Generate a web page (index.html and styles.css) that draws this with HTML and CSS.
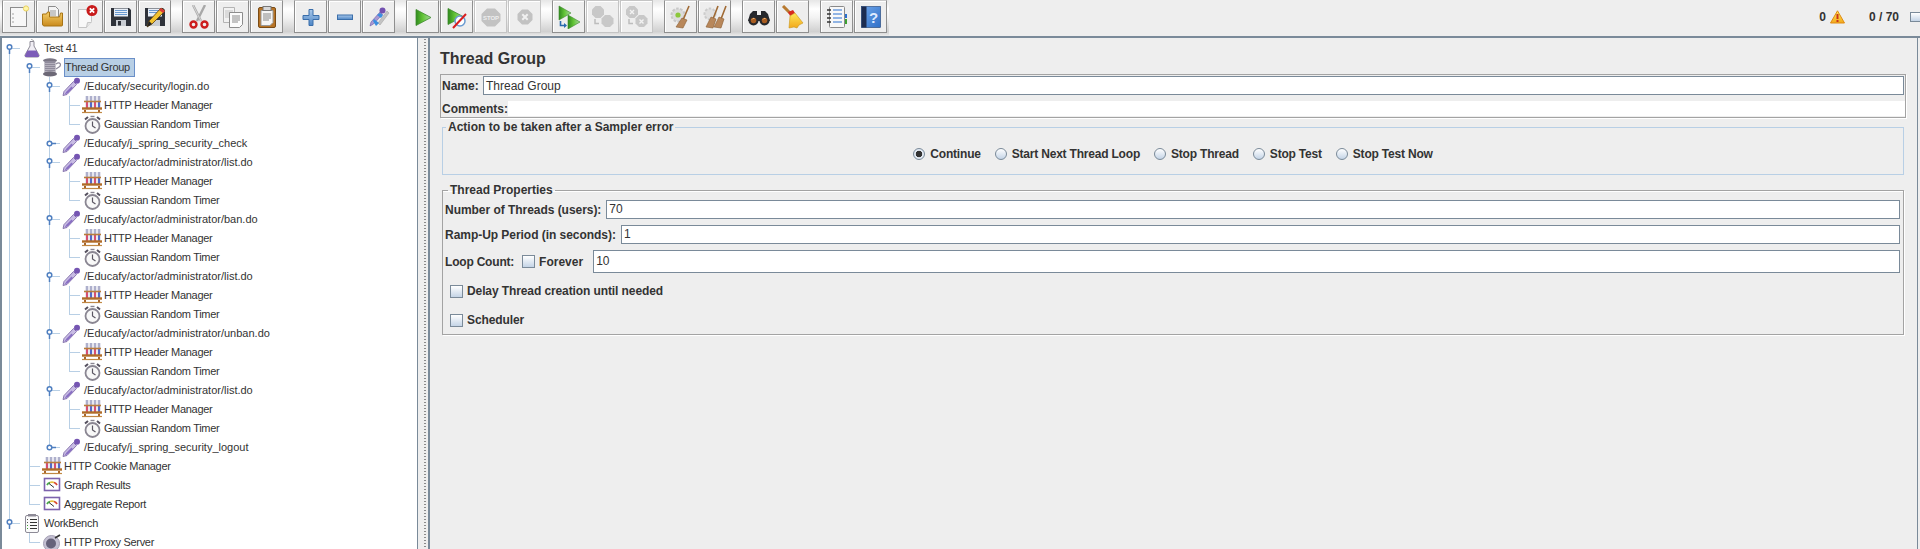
FILE: index.html
```html
<!DOCTYPE html>
<html lang="en">
<head>
<meta charset="utf-8">
<title>Apache JMeter - Test 41</title>
<link rel="stylesheet" href="styles.css">
</head>
<body>
<svg class="sprite" aria-hidden="true">
  <defs>
    <linearGradient id="gGreen" x1="0" y1="0" x2="1" y2="0"><stop offset="0" stop-color="#2f8a1e"/><stop offset=".45" stop-color="#62c436"/><stop offset="1" stop-color="#a8d8a0"/></linearGradient>
    <linearGradient id="gFolder" x1="0" y1="0" x2="0" y2="1"><stop offset="0" stop-color="#f6cf6a"/><stop offset="1" stop-color="#c98a1c"/></linearGradient>
    <linearGradient id="gBlue" x1="0" y1="0" x2="0" y2="1"><stop offset="0" stop-color="#a9c8ea"/><stop offset="1" stop-color="#4d86c6"/></linearGradient>
    <linearGradient id="gYel" x1="0" y1="0" x2="0" y2="1"><stop offset="0" stop-color="#ffe95a"/><stop offset="1" stop-color="#f2a81c"/></linearGradient>
    <linearGradient id="gBook" x1="0" y1="0" x2="1" y2="1"><stop offset="0" stop-color="#6fa6ea"/><stop offset="1" stop-color="#2f6fc8"/></linearGradient>

    <symbol id="t-new" viewBox="0 0 24 24"><rect x="3.500" y="2.500" width="16" height="19" fill="#f7f7f7" stroke="#8c8c8c"/><circle cx="6" cy="9" r=".8" fill="#999"/><circle cx="6" cy="13" r=".8" fill="#999"/><circle cx="6" cy="17" r=".8" fill="#999"/><circle cx="19" cy="3.500" r="2.600" fill="#fff6a8" stroke="#e8d060"/></symbol>
    <symbol id="t-open" viewBox="0 0 24 24"><path d="M7.500 1.500h7l3 3v9h-10z" fill="#f4f4f4" stroke="#8c8c8c"/><path d="M9 6h6M9 8h6M9 10h6" stroke="#9a9a9a"/><path d="M1.500 9h4l1-2h2v5h10l1-4h2v12a1 1 0 0 1-1 1H3a2 2 0 0 1-1.500-2z" fill="url(#gFolder)" stroke="#a87414"/></symbol>
    <symbol id="t-close" viewBox="0 0 24 24"><path d="M3.500 4.500h13v12l-5 6h-8z" fill="#f8f8f8" stroke="#c4c4c4"/><path d="M11.500 22.500l1-5h4" fill="#e4e4e4" stroke="#c4c4c4"/><circle cx="17" cy="5.500" r="5.500" fill="#c81a1a"/><path d="M14.800 3.300l4.400 4.400M19.200 3.300l-4.400 4.400" stroke="#fff" stroke-width="1.800"/></symbol>
    <symbol id="t-save" viewBox="0 0 24 24"><path d="M2 3h18l2 2v16H2z" fill="#2e323a"/><rect x="5" y="3.500" width="14" height="8" fill="#e8eef6"/><path d="M6 5.500h12M6 7.500h12M6 9.500h12" stroke="#6a9ad0"/><rect x="7" y="15" width="10" height="6" fill="#c8ccd2"/><rect x="9" y="16" width="3" height="4.500" fill="#2e323a"/></symbol>
    <symbol id="t-saveas" viewBox="0 0 24 24"><path d="M2 3h18l2 2v16H2z" fill="#2e323a"/><rect x="5" y="3.500" width="14" height="8" fill="#e8eef6"/><path d="M6 5.500h12M6 7.500h12" stroke="#6a9ad0"/><rect x="7" y="15" width="10" height="6" fill="#c8ccd2"/><path d="M4 22l2-6L18 3l4 3-13 13z" fill="#f2c230" stroke="#5a3c10" stroke-width=".8"/><path d="M18 3l4 3-2 2-4-3z" fill="#d83a3a"/><path d="M4 22l2-6 3 3z" fill="#222"/></symbol>
    <symbol id="t-cut" viewBox="0 0 24 24"><path d="M6 0l8 16M18 0l-8 16" stroke="#a8a8a8" stroke-width="2.400"/><path d="M6 0l8 16" stroke="#d8d8d8" stroke-width="1"/><circle cx="6.500" cy="19.500" r="3" fill="none" stroke="#cc1e1e" stroke-width="2.400"/><circle cx="17.500" cy="19.500" r="3" fill="none" stroke="#cc1e1e" stroke-width="2.400"/></symbol>
    <symbol id="t-copy" viewBox="0 0 24 24"><path d="M2.500 2.500h11v15h-11z" fill="#f2f2f2" stroke="#b4b4b4"/><path d="M4 6h8M4 8h8M4 10h8M4 12h8" stroke="#c4c4c4"/><path d="M8.500 7.500h13v12l-3 3h-10z" fill="#fbfbfb" stroke="#8c8c8c"/><path d="M11 11h8M11 13h8M11 15h8M11 17h6" stroke="#8a8a8a"/></symbol>
    <symbol id="t-paste" viewBox="0 0 24 24"><rect x="3.500" y="2.500" width="17" height="20" rx="1.500" fill="#b87426" stroke="#7a4c16"/><path d="M6 5.500h12v12l-3 3H6z" fill="#f6f6f6" stroke="#999"/><rect x="8" y="1.500" width="8" height="4" fill="#d8d8d8" stroke="#777"/><path d="M8 9h8M8 11h8M8 13h8M8 15h6" stroke="#888"/></symbol>
    <symbol id="t-plus" viewBox="0 0 24 24"><path d="M10 4.500h4v6h6v4h-6v6h-4v-6H4v-4h6z" fill="url(#gBlue)" stroke="#3a6eaa"/></symbol>
    <symbol id="t-minus" viewBox="0 0 24 24"><rect x="4.500" y="10" width="15" height="4.500" fill="url(#gBlue)" stroke="#3a6eaa"/></symbol>
    <symbol id="t-toggle" viewBox="0 0 24 24"><path d="M11 18l9-12 2 2-9 12z" fill="#c4c4c4" stroke="#a4a4a4" stroke-width=".6"/><path d="M3 21l1-4L13 7l2.500 2.500-9 9.500z" fill="#a79ad4" stroke="#6c58a8" stroke-width=".6"/><circle cx="15.500" cy="5.500" r="3" fill="#7250b0"/><path d="M7 14l5 4-3 3-3-5zM10 10l4 3 2-3-3-2z" fill="#3a8ee0"/></symbol>
    <symbol id="t-play" viewBox="0 0 24 24"><path d="M5 4.500l15 8-15 8z" fill="url(#gGreen)" stroke="#3c8a2c" stroke-width=".8"/></symbol>
    <symbol id="t-playnt" viewBox="0 0 24 24"><path d="M3 3.500l15 8-15 8z" fill="url(#gGreen)" stroke="#3c8a2c" stroke-width=".8"/><circle cx="15" cy="16" r="5" fill="#fff" stroke="#6a9ad0" stroke-width="1.500"/><path d="M8 23L21 9" stroke="#d81e1e" stroke-width="2"/></symbol>
    <symbol id="t-stop" viewBox="0 0 24 24"><path d="M8 3.500h8l5.500 5.500v7l-5.500 5.500H8L2.500 16V9z" fill="#c2c2c2"/><text x="12" y="15" class="svgtxt" text-anchor="middle">STOP</text></symbol>
    <symbol id="t-shut" viewBox="0 0 24 24"><path d="M9 4.500h6l4.500 4.500v6L15 19.500H9L4.500 15V9z" fill="#c2c2c2"/><path d="M9.300 9.300l5.400 5.400M14.700 9.300l-5.400 5.400" stroke="#f0f0f0" stroke-width="2"/></symbol>
    <symbol id="t-rstart" viewBox="0 0 24 24"><path d="M2 1l12 7-12 7z" fill="url(#gGreen)" stroke="#3c8a2c" stroke-width=".6"/><path d="M11 10l12 7-12 7z" fill="url(#gGreen)" stroke="#3c8a2c" stroke-width=".6"/><path d="M3.500 16v4.500h5" fill="none" stroke="#2a6ab0" stroke-width="1.600"/><path d="M7 18l3 2.500-3 2.500z" fill="#2a6ab0"/></symbol>
    <symbol id="t-rstop" viewBox="0 0 24 24"><path d="M4.500 1h5L13 4.500v5L9.500 13h-5L1 9.500v-5z" fill="#c8c8c8"/><path d="M14 10h5l3.500 3.500v5L19 22h-5l-3.500-3.500v-5z" fill="#c8c8c8"/><path d="M4 14v4.500h4" fill="none" stroke="#bdbdbd" stroke-width="1.500"/></symbol>
    <symbol id="t-rshut" viewBox="0 0 24 24"><path d="M4.500 1h5L13 4.500v5L9.500 13h-5L1 9.500v-5z" fill="#c8c8c8"/><path d="M14 10h5l3.500 3.500v5L19 22h-5l-3.500-3.500v-5z" fill="#c8c8c8"/><path d="M5 5l4 4M9 5l-4 4M14.500 14.500l4 4M18.500 14.500l-4 4" stroke="#f2f2f2" stroke-width="1.400"/><path d="M4 14v4.500h4" fill="none" stroke="#bdbdbd" stroke-width="1.500"/></symbol>
    <symbol id="t-clear" viewBox="0 0 24 24"><circle cx="9" cy="10" r="6.500" fill="#dcdcdc" stroke="#c8c8c8" stroke-width="2" stroke-dasharray="2.500 1.500"/><circle cx="9" cy="10" r="2.600" fill="#8cc83c"/><path d="M20 1l-6 14" stroke="#a06a34" stroke-width="1.600"/><path d="M13 13l5 2-4 8-7-1z" fill="#b8875a" stroke="#8a5c30" stroke-width=".6"/></symbol>
    <symbol id="t-clearall" viewBox="0 0 24 24"><circle cx="7" cy="9" r="5.500" fill="#e0e0e0" stroke="#cccccc" stroke-width="2" stroke-dasharray="2.500 1.500"/><path d="M15 1l-5 13M23 1l-5 13" stroke="#a06a34" stroke-width="1.600"/><path d="M8 12l5 2-3 9-7-1zM16 12l5 2-3 9-7-1z" fill="#b8875a" stroke="#8a5c30" stroke-width=".6"/></symbol>
    <symbol id="t-find" viewBox="0 0 24 24"><path d="M3 9l3-3h4v4h4V6h4l3 3 2 7H1z" fill="#26282c"/><circle cx="6.500" cy="15.500" r="5" fill="#26282c"/><circle cx="17.500" cy="15.500" r="5" fill="#26282c"/><circle cx="6.500" cy="15.500" r="2.800" fill="#a85c20"/><circle cx="17.500" cy="15.500" r="2.800" fill="#a85c20"/><path d="M5 14.500a2 2 0 0 1 2.500-1M16 14.500a2 2 0 0 1 2.500-1" stroke="#f0c080" fill="none"/></symbol>
    <symbol id="t-broom" viewBox="0 0 24 24"><path d="M2 1l7 7" stroke="#b87a30" stroke-width="3"/><path d="M7 7l5-2 2 3-5 3z" fill="#d82a1e"/><path d="M9 11l5-3 8 10-4 2-2 3-3-1-5 1z" fill="url(#gYel)" stroke="#c8961c" stroke-width=".6"/></symbol>
    <symbol id="t-func" viewBox="0 0 24 24"><rect x="4.500" y="1.500" width="15" height="21" rx="1" fill="#f8f8f8" stroke="#8a8a8a"/><path d="M8 5h9M8 9h9M8 13h9M8 17h9" stroke="#2a70d0" stroke-width="1.200"/><path d="M2 5h4M2 9h4M2 13h4M2 17h4" stroke="#333" stroke-width="1.400"/><path d="M21 9v4" stroke="#2a70d0" stroke-width="2"/><path d="M21 14v5" stroke="#3ca030" stroke-width="2"/></symbol>
    <symbol id="t-help" viewBox="0 0 24 24"><rect x="2.500" y="1.500" width="19" height="21" fill="url(#gBook)" stroke="#1c3c70" stroke-width=".6"/><rect x="2.500" y="1.500" width="5" height="21" fill="#1c2c50"/><text x="14.500" y="18" class="svghelp" text-anchor="middle">?</text></symbol>

    <symbol id="n-flask" viewBox="0 0 20 19"><path d="M8 2.500h4v4.500l5 9a1.500 1.500 0 0 1-1.500 2h-11A1.500 1.500 0 0 1 3 16l5-9z" fill="#f0eef4" stroke="#8d8a96"/><path d="M5.500 11.500h9l2.500 5a1 1 0 0 1-1 1.500H4a1 1 0 0 1-1-1.500z" fill="#7c5cb8"/><path d="M9 0l3 2" stroke="#aaa"/></symbol>
    <symbol id="n-spool" viewBox="0 0 20 19"><ellipse cx="8" cy="2.500" rx="7" ry="2.200" fill="#7a7684"/><rect x="2.500" y="3" width="11" height="12" fill="#8f8b9b"/><path d="M3 5.500h10M3 7.500h10M3 9.500h10M3 11.500h10M3 13.500h10" stroke="#b4b0bc"/><ellipse cx="8" cy="16" rx="7" ry="2.500" fill="#6c6876"/><path d="M14 6c4-3 6 1 3 3l-3 2" fill="none" stroke="#8f8b9b" stroke-width="1.200"/></symbol>
    <symbol id="n-pipette" viewBox="0 0 20 19"><path d="M1 18.500l1-4L11.500 4.500 14.500 7.500 5 17.500z" fill="#c8bce4" stroke="#75609f" stroke-width=".8"/><path d="M2.500 17.500l2-3 5-5 1.500 1.500-5 5z" fill="#8a70c4"/><circle cx="15" cy="3.800" r="3" fill="#7555b2"/></symbol>
    <symbol id="n-rack" viewBox="0 0 20 19"><path d="M5 0v12M9 0v12M13 0v12M17 0v12" stroke="#aeb0cc" stroke-width="2.600"/><path d="M5 5v7M13 5v7" stroke="#dc4468" stroke-width="1.800"/><path d="M9 5v7M17 5v7" stroke="#4a62c8" stroke-width="1.800"/><path d="M2 5.500h17" stroke="#b87c3c" stroke-width="1.600"/><path d="M0 12.500h20" stroke="#b06c28" stroke-width="2.400"/><path d="M3 14v3M17 14v3" stroke="#a8642a" stroke-width="2"/><path d="M0 16.500h20" stroke="#c08844" stroke-width="1.200"/></symbol>
    <symbol id="n-clock" viewBox="0 0 20 19"><circle cx="10.500" cy="11" r="7" fill="#f8f8f8" stroke="#8a8692" stroke-width="1.800"/><path d="M10.500 6.500V11l3 2" fill="none" stroke="#5a5662" stroke-width="1.200"/><path d="M3 4.500l3-2.500M18 4.500l-3-2.500" stroke="#55505e" stroke-width="2"/><path d="M8.500 1.500h4" stroke="#8a8692" stroke-width="1.400"/></symbol>
    <symbol id="n-graph" viewBox="0 0 20 19"><rect x="2.500" y="2.500" width="15" height="12" fill="#fff" stroke="#7c62ad" stroke-width="1.600"/><path d="M5 9a5 5 0 0 1 3-2.500" fill="none" stroke="#48a848" stroke-width="1.800"/><path d="M8 6.500a5 5 0 0 1 4 0" fill="none" stroke="#e8c040" stroke-width="1.800"/><path d="M12 6.500a5 5 0 0 1 3 2.500" fill="none" stroke="#d84830" stroke-width="1.800"/><path d="M7 7.500l5 4" stroke="#333"/></symbol>
    <symbol id="n-bench" viewBox="0 0 20 19"><rect x="3.500" y="1.500" width="13" height="17" rx="1.500" fill="#fafafa" stroke="#8d8a96"/><rect x="6" y="0" width="8" height="2.500" fill="#8d8a96"/><path d="M8 5.500h7M8 8.500h7M8 11.500h7M8 14.500h7" stroke="#333" stroke-width="1.100"/><path d="M5 5.500h1M5 8.500h1" stroke="#555"/><path d="M5 11.500h1M5 14.500h1" stroke="#3ca030"/></symbol>
    <symbol id="n-proxy" viewBox="0 0 20 19"><circle cx="9.500" cy="10.500" r="8" fill="#c4c0d2" stroke="#a49fb4"/><circle cx="9" cy="10.500" r="5" fill="#66627a"/><path d="M13 5l5-3" stroke="#333" stroke-width="1.600"/></symbol>
    <symbol id="h-open" viewBox="0 0 20 19"><path d="M10 9.500h8" stroke="#b8cfe5"/><circle cx="7.500" cy="8" r="2.300" fill="#fff" stroke="#4f7fc0" stroke-width="1.500"/><path d="M7.500 10v5" stroke="#4f7fc0" stroke-width="1.500"/></symbol>
    <symbol id="h-closed" viewBox="0 0 20 19"><path d="M13 9.500h5" stroke="#b8cfe5"/><circle cx="7.500" cy="9.500" r="2.300" fill="#fff" stroke="#4f7fc0" stroke-width="1.500"/><path d="M10 9.500h4" stroke="#4f7fc0" stroke-width="1.500"/></symbol>
  </defs>
</svg>

<header class="toolbar">
  <div class="tools">
    <div class="group">
      <button class="tb"><svg class="ti"><use href="#t-new"/></svg></button>
      <button class="tb"><svg class="ti"><use href="#t-open"/></svg></button>
      <button class="tb"><svg class="ti"><use href="#t-close"/></svg></button>
      <button class="tb"><svg class="ti"><use href="#t-save"/></svg></button>
      <button class="tb"><svg class="ti"><use href="#t-saveas"/></svg></button>
    </div>
    <div class="group">
      <button class="tb"><svg class="ti"><use href="#t-cut"/></svg></button>
      <button class="tb"><svg class="ti"><use href="#t-copy"/></svg></button>
      <button class="tb"><svg class="ti"><use href="#t-paste"/></svg></button>
    </div>
    <div class="group">
      <button class="tb"><svg class="ti"><use href="#t-plus"/></svg></button>
      <button class="tb"><svg class="ti"><use href="#t-minus"/></svg></button>
      <button class="tb"><svg class="ti"><use href="#t-toggle"/></svg></button>
    </div>
    <div class="group">
      <button class="tb"><svg class="ti"><use href="#t-play"/></svg></button>
      <button class="tb"><svg class="ti"><use href="#t-playnt"/></svg></button>
      <button class="tb off"><svg class="ti"><use href="#t-stop"/></svg></button>
      <button class="tb off"><svg class="ti"><use href="#t-shut"/></svg></button>
    </div>
    <div class="group">
      <button class="tb"><svg class="ti"><use href="#t-rstart"/></svg></button>
      <button class="tb off"><svg class="ti"><use href="#t-rstop"/></svg></button>
      <button class="tb off"><svg class="ti"><use href="#t-rshut"/></svg></button>
    </div>
    <div class="group">
      <button class="tb"><svg class="ti"><use href="#t-clear"/></svg></button>
      <button class="tb"><svg class="ti"><use href="#t-clearall"/></svg></button>
    </div>
    <div class="group">
      <button class="tb"><svg class="ti"><use href="#t-find"/></svg></button>
      <button class="tb"><svg class="ti"><use href="#t-broom"/></svg></button>
    </div>
    <div class="group">
      <button class="tb"><svg class="ti"><use href="#t-func"/></svg></button>
      <button class="tb"><svg class="ti"><use href="#t-help"/></svg></button>
    </div>
  </div>
  <div class="status">
    <b class="count">0</b>
    <svg class="warn" viewBox="0 0 15 14"><path d="M7.500 .8L14.500 13H.5z" fill="url(#gYel)" stroke="#e08a10"/><path d="M7.500 4v5" stroke="#c8341a" stroke-width="2"/><path d="M7.500 10v2" stroke="#c8341a" stroke-width="2"/></svg>
    <b class="threads">0 / 70</b>
    <span class="led"></span>
  </div>
</header>

<main class="split">
  <nav class="tree">
    <div class="row"><i class="g d"><svg class="h"><use href="#h-open"/></svg></i><svg class="ic"><use href="#n-flask"/></svg><span class="lb">Test 41</span></div>
    <div class="row"><i class="g v"></i><i class="g d"><svg class="h"><use href="#h-open"/></svg></i><svg class="ic"><use href="#n-spool"/></svg><span class="lb sel">Thread Group</span></div>
    <div class="row"><i class="g v"></i><i class="g v"></i><i class="g v"><svg class="h"><use href="#h-open"/></svg></i><svg class="ic"><use href="#n-pipette"/></svg><span class="lb path">/Educafy/security/login.do</span></div>
    <div class="row"><i class="g v"></i><i class="g v"></i><i class="g v"></i><i class="g t"></i><svg class="ic"><use href="#n-rack"/></svg><span class="lb">HTTP Header Manager</span></div>
    <div class="row"><i class="g v"></i><i class="g v"></i><i class="g v"></i><i class="g c"></i><svg class="ic"><use href="#n-clock"/></svg><span class="lb">Gaussian Random Timer</span></div>
    <div class="row"><i class="g v"></i><i class="g v"></i><i class="g v"><svg class="h"><use href="#h-closed"/></svg></i><svg class="ic"><use href="#n-pipette"/></svg><span class="lb path">/Educafy/j_spring_security_check</span></div>
    <div class="row"><i class="g v"></i><i class="g v"></i><i class="g v"><svg class="h"><use href="#h-open"/></svg></i><svg class="ic"><use href="#n-pipette"/></svg><span class="lb path">/Educafy/actor/administrator/list.do</span></div>
    <div class="row"><i class="g v"></i><i class="g v"></i><i class="g v"></i><i class="g t"></i><svg class="ic"><use href="#n-rack"/></svg><span class="lb">HTTP Header Manager</span></div>
    <div class="row"><i class="g v"></i><i class="g v"></i><i class="g v"></i><i class="g c"></i><svg class="ic"><use href="#n-clock"/></svg><span class="lb">Gaussian Random Timer</span></div>
    <div class="row"><i class="g v"></i><i class="g v"></i><i class="g v"><svg class="h"><use href="#h-open"/></svg></i><svg class="ic"><use href="#n-pipette"/></svg><span class="lb path">/Educafy/actor/administrator/ban.do</span></div>
    <div class="row"><i class="g v"></i><i class="g v"></i><i class="g v"></i><i class="g t"></i><svg class="ic"><use href="#n-rack"/></svg><span class="lb">HTTP Header Manager</span></div>
    <div class="row"><i class="g v"></i><i class="g v"></i><i class="g v"></i><i class="g c"></i><svg class="ic"><use href="#n-clock"/></svg><span class="lb">Gaussian Random Timer</span></div>
    <div class="row"><i class="g v"></i><i class="g v"></i><i class="g v"><svg class="h"><use href="#h-open"/></svg></i><svg class="ic"><use href="#n-pipette"/></svg><span class="lb path">/Educafy/actor/administrator/list.do</span></div>
    <div class="row"><i class="g v"></i><i class="g v"></i><i class="g v"></i><i class="g t"></i><svg class="ic"><use href="#n-rack"/></svg><span class="lb">HTTP Header Manager</span></div>
    <div class="row"><i class="g v"></i><i class="g v"></i><i class="g v"></i><i class="g c"></i><svg class="ic"><use href="#n-clock"/></svg><span class="lb">Gaussian Random Timer</span></div>
    <div class="row"><i class="g v"></i><i class="g v"></i><i class="g v"><svg class="h"><use href="#h-open"/></svg></i><svg class="ic"><use href="#n-pipette"/></svg><span class="lb path">/Educafy/actor/administrator/unban.do</span></div>
    <div class="row"><i class="g v"></i><i class="g v"></i><i class="g v"></i><i class="g t"></i><svg class="ic"><use href="#n-rack"/></svg><span class="lb">HTTP Header Manager</span></div>
    <div class="row"><i class="g v"></i><i class="g v"></i><i class="g v"></i><i class="g c"></i><svg class="ic"><use href="#n-clock"/></svg><span class="lb">Gaussian Random Timer</span></div>
    <div class="row"><i class="g v"></i><i class="g v"></i><i class="g v"><svg class="h"><use href="#h-open"/></svg></i><svg class="ic"><use href="#n-pipette"/></svg><span class="lb path">/Educafy/actor/administrator/list.do</span></div>
    <div class="row"><i class="g v"></i><i class="g v"></i><i class="g v"></i><i class="g t"></i><svg class="ic"><use href="#n-rack"/></svg><span class="lb">HTTP Header Manager</span></div>
    <div class="row"><i class="g v"></i><i class="g v"></i><i class="g v"></i><i class="g c"></i><svg class="ic"><use href="#n-clock"/></svg><span class="lb">Gaussian Random Timer</span></div>
    <div class="row"><i class="g v"></i><i class="g v"></i><i class="g u"><svg class="h"><use href="#h-closed"/></svg></i><svg class="ic"><use href="#n-pipette"/></svg><span class="lb path">/Educafy/j_spring_security_logout</span></div>
    <div class="row"><i class="g v"></i><i class="g t"></i><svg class="ic"><use href="#n-rack"/></svg><span class="lb">HTTP Cookie Manager</span></div>
    <div class="row"><i class="g v"></i><i class="g t"></i><svg class="ic"><use href="#n-graph"/></svg><span class="lb">Graph Results</span></div>
    <div class="row"><i class="g v"></i><i class="g c"></i><svg class="ic"><use href="#n-graph"/></svg><span class="lb">Aggregate Report</span></div>
    <div class="row"><i class="g u"><svg class="h"><use href="#h-open"/></svg></i><svg class="ic"><use href="#n-bench"/></svg><span class="lb">WorkBench</span></div>
    <div class="row"><i class="g"></i><i class="g c"></i><svg class="ic"><use href="#n-proxy"/></svg><span class="lb">HTTP Proxy Server</span></div>
  </nav>
  <div class="divider"></div>
  <section class="panel">
    <h1 class="title">Thread Group</h1>
    <div class="namebox">
      <div class="namerow"><label class="bold namelabel">Name:</label><div class="field">Thread Group</div></div>
      <div class="commentrow"><label class="bold">Comments:</label><div class="comment"></div></div>
    </div>
    <fieldset class="fs blue">
      <legend class="bold">Action to be taken after a Sampler error</legend>
      <div class="radios">
        <span class="opt"><i class="radio on"></i><b>Continue</b></span>
        <span class="opt"><i class="radio"></i><b>Start Next Thread Loop</b></span>
        <span class="opt"><i class="radio"></i><b>Stop Thread</b></span>
        <span class="opt"><i class="radio"></i><b>Stop Test</b></span>
        <span class="opt"><i class="radio"></i><b>Stop Test Now</b></span>
      </div>
    </fieldset>
    <fieldset class="fs grey props">
      <legend class="bold">Thread Properties</legend>
      <div class="prow"><label class="bold">Number of Threads (users):</label><div class="field">70</div></div>
      <div class="prow"><label class="bold">Ramp-Up Period (in seconds):</label><div class="field">1</div></div>
      <div class="prow loop"><label class="bold">Loop Count:</label><i class="check"></i><b class="forever">Forever</b><div class="field">10</div></div>
      <div class="crow first"><i class="check"></i><b>Delay Thread creation until needed</b></div>
      <div class="crow"><i class="check"></i><b>Scheduler</b></div>
    </fieldset>
  </section>
</main>
</body>
</html>
```

FILE: styles.css
```css
* { box-sizing: border-box; }

html, body {
  margin: 0;
  height: 549px;
  overflow: hidden;
}

body {
  display: flex;
  flex-direction: column;
  background: #eeeeee;
  color: #333333;
  font: 12px/14px "Liberation Sans", Arial, sans-serif;
}

.sprite { display: block; width: 0; height: 0; }
.svgtxt { font: bold 6px "Liberation Sans", sans-serif; fill: #eeeeee; }
.svghelp { font: bold 15px "Liberation Sans", sans-serif; fill: #dfeaff; }

/* toolbar */
.toolbar {
  flex: none;
  display: flex;
  height: 38px;
  border-bottom: 2px solid #7a8a99;
  background: #eeeeee;
}

.tools {
  display: flex;
  gap: 11px;
  height: 36px;
  padding-left: 2px;
  padding-right: 2px;
  background: linear-gradient(#e6e6e6, #ffffff 25%, #f2f2f2 50%, #d0d0d0 88%, #ececec);
}

.group { display: flex; gap: 1px; }

.tb {
  display: flex;
  align-items: center;
  justify-content: center;
  width: 33px;
  height: 33px;
  margin: 0;
  padding: 0;
  background: #eeeeee;
  border: 1px solid #8f8f8f;
  border-top-color: #c8c8c8;
  box-shadow: inset 1px 1px 0 #ffffff;
}

.tb.off { border-color: #c4c4c4; }
.ti { display: block; width: 24px; height: 24px; }

.status {
  flex: 1;
  display: flex;
  align-items: center;
  justify-content: flex-end;
  overflow: hidden;
  height: 36px;
  padding-bottom: 2px;
}

.count { margin-right: 4px; }
.warn { width: 15px; height: 14px; margin-right: 24px; }
.threads { margin-right: 11px; }

.led {
  flex: none;
  width: 10px;
  height: 10px;
  margin-bottom: 1px;
  border: 1px solid #7a8a99;
  border-right: 0;
  background: linear-gradient(#ffffff, #c4d4e6);
}

/* split */
.split {
  flex: 1;
  min-height: 0;
  display: flex;
  padding-right: 2px;
}

.tree {
  flex: none;
  width: 418px;
  padding-top: 1px;
  background: #ffffff;
  border-left: 2px solid #7a8a99;
  border-right: 1px solid #7a8a99;
  overflow: hidden;
}

.row { display: flex; height: 19px; white-space: nowrap; }

.g {
  display: block;
  flex: none;
  width: 20px;
  height: 19px;
  background-repeat: no-repeat;
}

.v {
  background-image: linear-gradient(#b8cfe5, #b8cfe5);
  background-position: 7px 0;
  background-size: 1px 100%;
}

.d {
  background-image: linear-gradient(#b8cfe5, #b8cfe5);
  background-position: 7px 9px;
  background-size: 1px 10px;
}

.u {
  background-image: linear-gradient(#b8cfe5, #b8cfe5);
  background-position: 7px 0;
  background-size: 1px 10px;
}

.t {
  background-image: linear-gradient(#b8cfe5, #b8cfe5), linear-gradient(#b8cfe5, #b8cfe5);
  background-position: 7px 0, 7px 9px;
  background-size: 1px 100%, 11px 1px;
}

.c {
  background-image: linear-gradient(#b8cfe5, #b8cfe5), linear-gradient(#b8cfe5, #b8cfe5);
  background-position: 7px 0, 7px 9px;
  background-size: 1px 10px, 11px 1px;
}

.h { display: block; width: 20px; height: 19px; }

.ic {
  flex: none;
  width: 20px;
  height: 19px;
  margin: 0 2px 0 0;
  overflow: visible;
}

.lb {
  height: 19px;
  padding: 0 2px 0 0;
  border: 1px solid transparent;
  border-left-width: 0;
  font-size: 11px;
  letter-spacing: -.3px;
  line-height: 17px;
}

.lb.path { letter-spacing: 0; }

.lb.sel {
  padding-right: 4px;
  background: #b8cfe5;
  border-color: #6a8fc8;
  border-left-width: 1px;
}

/* right panel */
.divider {
  flex: none;
  width: 10px;
  background-image: radial-gradient(circle, #8a8a8a 0, #8a8a8a .7px, transparent 1px);
  background-position: 6px 0;
  background-size: 2px 3px;
  background-repeat: repeat-y;
}

.panel {
  flex: 1;
  min-width: 0;
  padding: 11px 11px 0 10px;
  border-left: 2px solid #7a8a99;
  border-right: 1px solid #7a8a99;
}

.bold, b { font-weight: bold; }
label { display: block; flex: none; }

.title {
  margin: 0 0 5px;
  font-size: 16px;
  line-height: 20px;
  font-weight: bold;
}

.namebox {
  height: 44px;
  padding: 1px 0 0 1px;
  border: 1px solid #a3a3a3;
  box-shadow: 1px 1px 0 #ffffff;
}

.namerow { display: flex; align-items: center; height: 19px; padding-right: 1px; }
.namelabel { width: 41px; padding-top: 1px; }
.namerow .field { line-height: 18px; }

.field {
  flex: 1;
  height: 19px;
  padding-left: 2px;
  border: 1px solid #7a8a99;
  background: #ffffff;
  font-weight: normal;
  line-height: 17px;
}

.commentrow { display: flex; align-items: center; height: 15px; margin-top: 6px; }
.commentrow label { padding-top: 1px; }
.comment { flex: 1; height: 15px; background: #ffffff; }

.fs {
  display: block;
  min-width: 0;
  margin: 2px 2px 0;
  padding: 0;
}

.fs legend {
  margin-left: 3px;
  padding: 0 2px;
  line-height: 14px;
}

.blue { border: 1px solid #b8cfe5; }

.radios {
  display: flex;
  justify-content: center;
  gap: 14px;
  height: 40px;
  padding-top: 13px;
  letter-spacing: -.2px;
}

.opt { display: flex; align-items: center; gap: 5px; height: 14px; }

.radio {
  display: block;
  width: 12px;
  height: 12px;
  border: 1px solid #7a8a99;
  border-radius: 50%;
  background: linear-gradient(#ffffff, #c4d4e6);
}

.radio.on {
  background: radial-gradient(circle, #333333 0, #333333 3px, #e8eef6 3.6px, #d4e0ee 6px);
}

.grey {
  margin-top: 8px;
  border: 1px solid #a3a3a3;
  box-shadow: inset 0 1px 0 #ffffff, 1px 1px 0 #ffffff;
}

.props { height: 152px; padding: 3px 3px 0 2px; }

.prow { display: flex; align-items: center; height: 19px; margin-bottom: 6px; }
.prow label { margin-right: 5px; letter-spacing: -.04px; }
.prow.loop { height: 23px; margin-bottom: 0; }
.prow.loop .field { height: 23px; line-height: 21px; }
.prow.loop label { margin-right: 8px; letter-spacing: -.2px; }

.check {
  display: block;
  flex: none;
  width: 13px;
  height: 13px;
  border: 1px solid #7a8a99;
  background: linear-gradient(#ffffff, #c4d4e6);
}

.forever { margin: 0 10px 0 4px; }

.crow { display: flex; align-items: center; gap: 4px; height: 14px; margin-top: 15px; padding-left: 5px; letter-spacing: -.1px; }
.crow.first { margin-top: 11px; }
```
